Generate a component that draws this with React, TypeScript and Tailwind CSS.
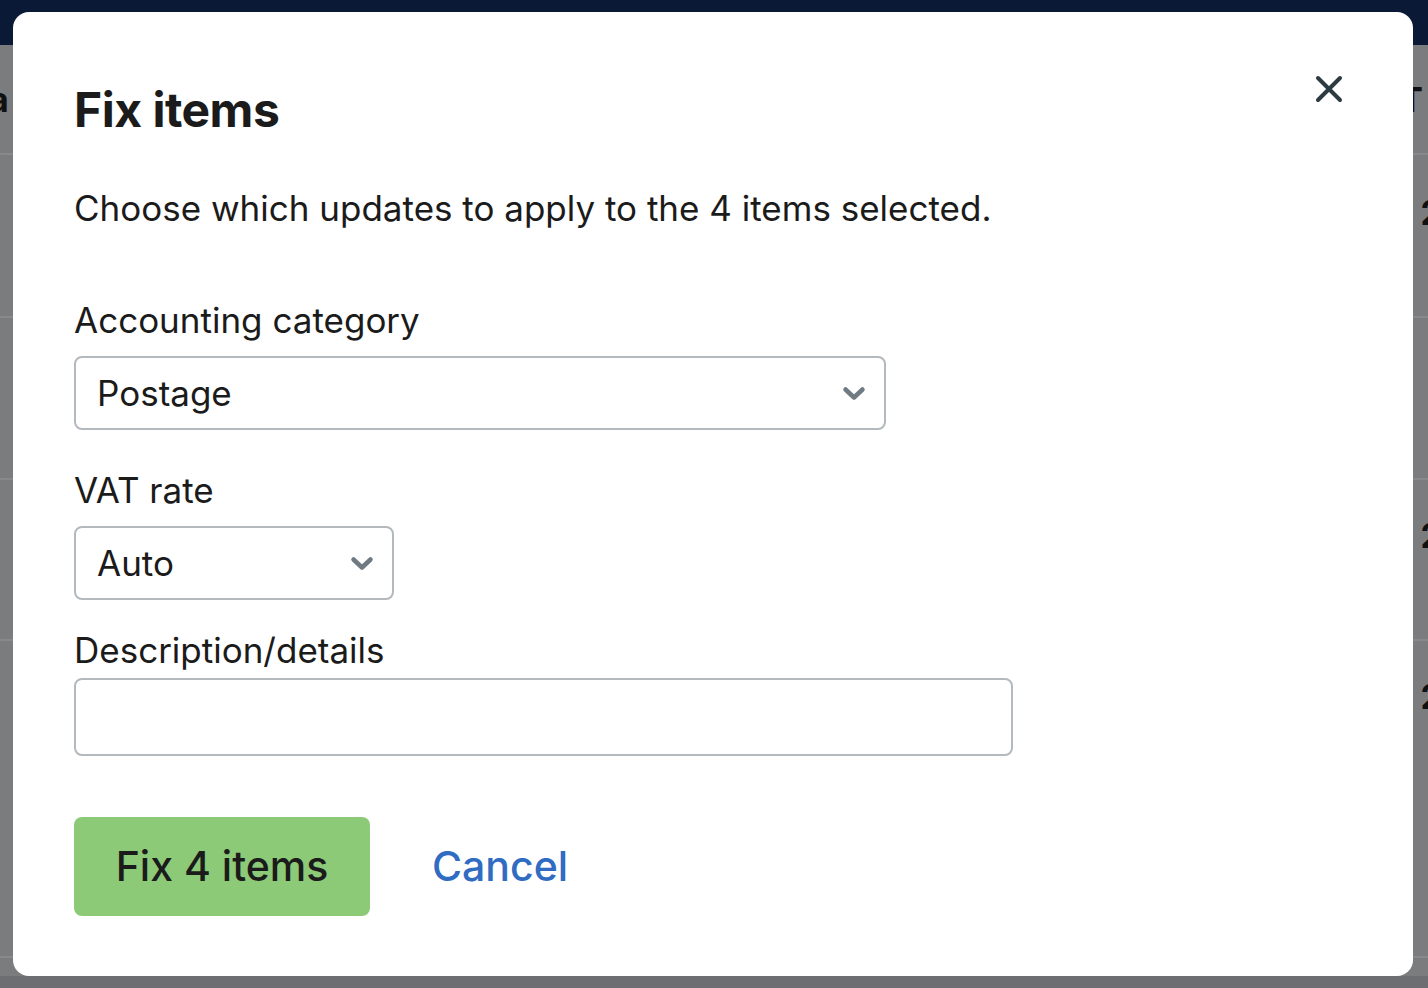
import React from "react";

function Chevron() {
  return (
    <svg width="24" height="15" viewBox="0 0 24 15" className="shrink-0">
      <polyline
        points="3.5,3.5 12,11.5 20.5,3.5"
        fill="none"
        stroke="#6f7a82"
        strokeWidth="4.5"
        strokeLinecap="round"
        strokeLinejoin="round"
      />
    </svg>
  );
}

function CloseIcon() {
  return (
    <svg width="28" height="28" viewBox="0 0 28 28">
      <path
        d="M3 3 L25 25 M25 3 L3 25"
        stroke="#2c3a42"
        strokeWidth="4"
        strokeLinecap="round"
      />
    </svg>
  );
}

export default function App() {
  return (
    <div
      className="relative w-[1428px] h-[988px] overflow-hidden bg-[#7b7c7e]"
      style={{ fontFamily: "Inter, 'Noto Sans', sans-serif" }}
    >
      {/* page behind the overlay */}
      <div className="h-[45px] bg-[#0a1a36]" />
      <div className="flex flex-col text-[34px] font-bold text-[#111]">
        <div className="h-[110px] border-b-2 border-[#88898b] flex items-center justify-between">
          <span className="-ml-[11px]">a</span>
          <span className="mr-[5px]">T</span>
        </div>
        <div className="h-[163px] border-b-2 border-[#88898b] flex justify-end pt-[32px]">
          <span className="mr-[-14px]">2</span>
        </div>
        <div className="h-[162px] border-b-2 border-[#88898b]" />
        <div className="h-[161px] border-b-2 border-[#88898b] flex justify-end pt-[30px]">
          <span className="mr-[-14px]">2</span>
        </div>
        <div className="h-[317px] border-b-2 border-[#88898b] flex justify-end pt-[30px]">
          <span className="mr-[-14px]">2</span>
        </div>
      </div>
      <div className="absolute left-0 right-0 bottom-0 h-[12px] bg-[#6c6e72]" />

      {/* modal */}
      <div className="absolute left-[13px] top-[12px] w-[1400px] h-[964px] bg-white rounded-[16px] pl-[61px] pr-[70px] pt-[78px]">
        <div className="flex items-start justify-between">
          <h2 className="text-[48px] font-bold text-[#1b1b1b] leading-[40px] tracking-[-0.5px]">
            Fix items
          </h2>
          <button className="mt-[-15px]">
            <CloseIcon />
          </button>
        </div>

        <p className="mt-[58px] text-[35px] text-[#1b1b1b] leading-[40px]">
          Choose which updates to apply to the 4 items selected.
        </p>

        <label className="block mt-[72px] text-[35px] text-[#1b1b1b] leading-[40px]">
          Accounting category
        </label>
        <div className="mt-[16px] w-[812px] h-[74px] border-2 border-[#b4b9bd] rounded-[8px] flex items-center justify-between pl-[21px] pr-[18px]">
          <span className="text-[35px] text-[#1b1b1b]">Postage</span>
          <Chevron />
        </div>

        <label className="block mt-[40px] text-[35px] text-[#1b1b1b] leading-[40px]">
          VAT rate
        </label>
        <div className="mt-[16px] w-[320px] h-[74px] border-2 border-[#b4b9bd] rounded-[8px] flex items-center justify-between pl-[21px] pr-[18px]">
          <span className="text-[35px] text-[#1b1b1b]">Auto</span>
          <Chevron />
        </div>

        <label className="block mt-[30px] text-[35px] text-[#1b1b1b] leading-[40px]">
          Description/details
        </label>
        <div className="mt-[8px] w-[939px] h-[78px] border-2 border-[#b4b9bd] rounded-[8px]" />

        <div className="mt-[61px] flex items-center gap-[62px]">
          <button className="w-[296px] h-[99px] bg-[#8cca78] rounded-[8px] text-[41px] font-medium text-[#1b1b1b]">
            Fix 4 items
          </button>
          <button className="text-[41px] font-medium text-[#2f6cc2]">
            Cancel
          </button>
        </div>
      </div>
    </div>
  );
}
